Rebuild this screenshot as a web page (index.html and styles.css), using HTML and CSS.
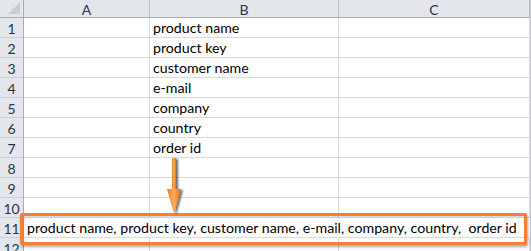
FILE: index.html
```html
<!DOCTYPE html>
<html lang="en">
<head>
  <meta charset="UTF-8" />
  <title>Sheet</title>
  <link rel="stylesheet" href="styles.css">
</head>
<body>
  <div class="sheet">
    <div class="grid">
      <div class="hd corner"><span class="tri"></span></div>
      <div class="hd col">A</div>
      <div class="hd col">B</div>
      <div class="hd col">C</div>

      <div class="hd row">1</div><div class="cell"></div><div class="cell">product name</div><div class="cell"></div>
      <div class="hd row">2</div><div class="cell"></div><div class="cell">product key</div><div class="cell"></div>
      <div class="hd row">3</div><div class="cell"></div><div class="cell">customer name</div><div class="cell"></div>
      <div class="hd row">4</div><div class="cell"></div><div class="cell">e-mail</div><div class="cell"></div>
      <div class="hd row">5</div><div class="cell"></div><div class="cell">company</div><div class="cell"></div>
      <div class="hd row">6</div><div class="cell"></div><div class="cell">country</div><div class="cell"></div>
      <div class="hd row">7</div><div class="cell"></div><div class="cell">order id</div><div class="cell"></div>
      <div class="hd row">8</div><div class="cell"></div><div class="cell"></div><div class="cell"></div>
      <div class="hd row">9</div><div class="cell"></div><div class="cell"></div><div class="cell"></div>
      <div class="hd row">10</div><div class="cell"></div><div class="cell"></div><div class="cell"></div>
      <div class="hd row">11</div><div class="cell joined">product name, product key, customer name, e-mail, company, country,&nbsp; order id</div><div class="cell blank"></div><div class="cell blank"></div>
      <div class="hd row">12</div><div class="cell"></div><div class="cell"></div><div class="cell"></div>
    </div>

    <div class="highlight"></div>

    <svg class="arrow" width="26" height="64" viewBox="0 0 26 64">
      <defs>
        <linearGradient id="shaft" x1="0" x2="1" y1="0" y2="0">
          <stop offset="0" stop-color="#ec7e1c"/>
          <stop offset="0.5" stop-color="#fbac5c"/>
          <stop offset="1" stop-color="#e26e14"/>
        </linearGradient>
        <filter id="sh" x="-50%" y="-20%" width="200%" height="150%">
          <feGaussianBlur in="SourceAlpha" stdDeviation="1.2"/>
          <feOffset dx="1.5" dy="1" result="b"/>
          <feComponentTransfer><feFuncA type="linear" slope="0.6"/></feComponentTransfer>
          <feMerge><feMergeNode/><feMergeNode in="SourceGraphic"/></feMerge>
        </filter>
      </defs>
      <g filter="url(#sh)">
        <rect x="10" y="2" width="4" height="34" fill="url(#shaft)"/>
        <path d="M5 33 L19 33 L12 58 Z" fill="url(#shaft)"/>
      </g>
    </svg>
  </div>
</body>
</html>
```

FILE: styles.css
```css
html, body {
  margin: 0;
  padding: 0;
  background: #fff;
  overflow: hidden;
}

.sheet {
  position: relative;
  width: 531px;
  height: 251px;
  font-family: Lato, "Liberation Sans", sans-serif;
}

.grid {
  display: grid;
  grid-template-columns: 24px 126px 189px 191px;
  grid-template-rows: 18px repeat(12, 20px);
  border-right: 1px solid #c6c9cd;
  width: 530px;
}

.cell {
  border-right: 1px solid #d9d9d9;
  border-bottom: 1px solid #d9d9d9;
  font-size: 14.2px;
  color: #000;
  padding: 0 3px;
  display: flex;
  align-items: flex-end;
  padding-bottom: 0;
  white-space: nowrap;
  line-height: 18px;
}

.cell.joined {
  overflow: visible;
  border-right: none;
  position: relative;
  z-index: 1;
}

.cell.blank {
  border-right-color: transparent;
}

.cell.blank:last-child {
  border-right-color: #d9d9d9;
}

.hd {
  background: #e3e6eb;
  color: #27364a;
  font-size: 14px;
  display: flex;
  align-items: center;
  justify-content: center;
  border-right: 1px solid #c2c6cc;
  border-bottom: 1px solid #c2c6cc;
}

.hd.col {
  border-bottom-color: #a9acb1;
  border-right-color: #babec4;
  padding-top: 1px;
}

.hd.row {
  border-bottom-color: #c9ccd1;
  border-right-color: #a9acb1;
  padding-top: 2px;
}

.corner {
  position: relative;
  border-bottom-color: #a9acb1;
  border-right-color: #a9acb1;
}

.tri {
  position: absolute;
  right: 3px;
  bottom: 3px;
  width: 0;
  height: 0;
  border-left: 12px solid transparent;
  border-bottom: 12px solid #c9ccd1;
}

.highlight {
  position: absolute;
  left: 20px;
  top: 213px;
  width: 501px;
  height: 26px;
  border: 3px solid #f47f3c;
  border-radius: 2px;
  box-shadow: 1px 2px 3px rgba(0, 0, 0, 0.35), inset 1px 1px 2px rgba(0, 0, 0, 0.2);
  z-index: 2;
  pointer-events: none;
}

.arrow {
  position: absolute;
  left: 162px;
  top: 156px;
  z-index: 3;
}
```
